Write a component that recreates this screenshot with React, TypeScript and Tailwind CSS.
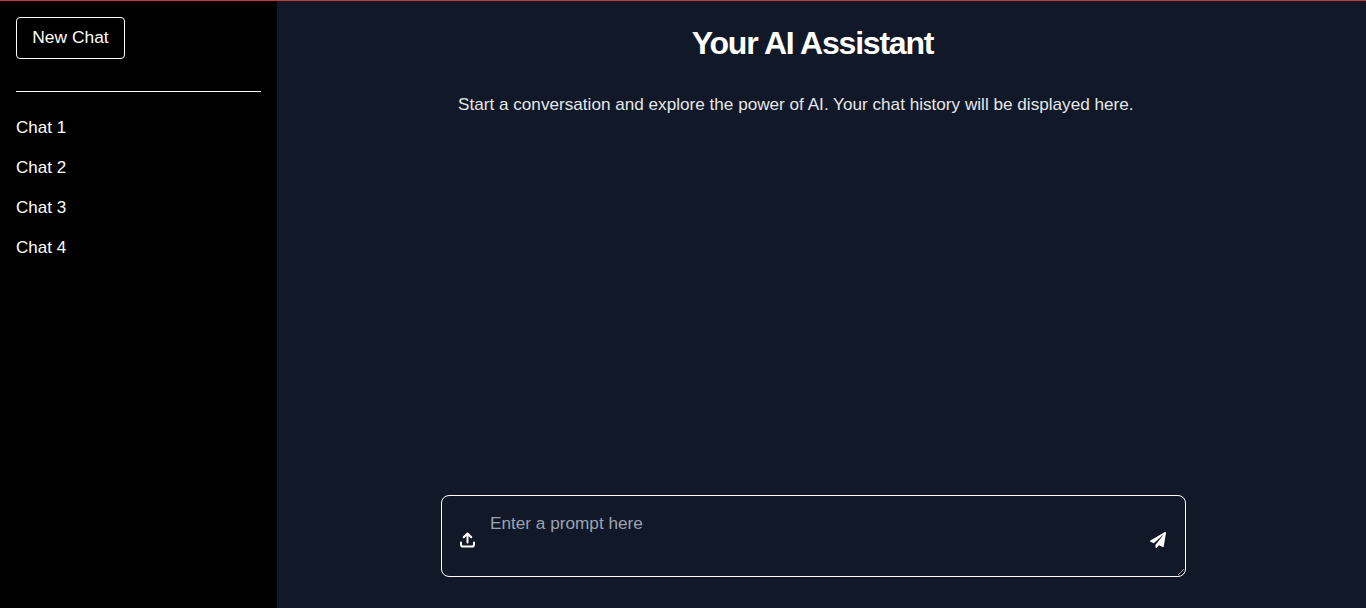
import { FaPaperPlane } from 'react-icons/fa';

const chats = ['Chat 1', 'Chat 2', 'Chat 3', 'Chat 4'];

const UploadIcon = () => (
  <svg
    viewBox="0 0 16 16"
    fill="none"
    stroke="currentColor"
    strokeWidth="2"
    strokeLinecap="round"
    strokeLinejoin="round"
    className="absolute top-[37px] left-[18px] h-4 w-4"
  >
    <path d="M8.5 10.5V2M4.7 5.3L8.5 1.5L12.3 5.3" />
    <path d="M2 10.5V12.5C2 13.6 2.7 14.6 4 14.6H13C14.3 14.6 15 13.6 15 12.5V10.5" />
  </svg>
);

const App = () => {
  return (
    <div className="flex h-[608px] overflow-hidden border-t border-[#c53a3f] bg-[#111827] font-['Liberation_Sans',Arial,sans-serif] text-white">
      {/* Sidebar */}
      <aside className="flex w-[277px] shrink-0 flex-col bg-black p-4">
        <button className="h-[42px] w-[109px] rounded border border-white pb-0.5 text-[17.4px]">New Chat</button>
        <hr className="mt-8 border-white" />
        <ul className="mt-4 flex flex-col">
          {chats.map((chat) => (
            <li key={chat} className="flex h-10 items-center text-[17px]">
              {chat}
            </li>
          ))}
        </ul>
      </aside>

      {/* Main */}
      <main className="flex flex-1 flex-col items-center pr-4">
        <div className="flex h-full w-[745px] flex-col">
          <h1 className="mt-5 pr-0.5 text-center text-[32px]/[44px] font-bold tracking-[-1.2px]">Your AI Assistant</h1>
          <p className="mt-[27px] px-[17px] text-[17.15px]/6 text-[#e5e7eb]">
            Start a conversation and explore the power of AI. Your chat history will be displayed here.
          </p>
          <div className="relative mt-auto mb-[31px] flex">
            <textarea
              placeholder="Enter a prompt here"
              className="h-[82px] w-full rounded-lg border border-white bg-transparent pt-[15px] pr-12 pl-[48px] text-[17.2px]/6 outline-none placeholder:text-[#9ca3af]"
            />
            <UploadIcon />
            <FaPaperPlane className="absolute top-[37px] right-[20px] h-4 w-4" />
          </div>
        </div>
      </main>
    </div>
  );
};

export default App;
